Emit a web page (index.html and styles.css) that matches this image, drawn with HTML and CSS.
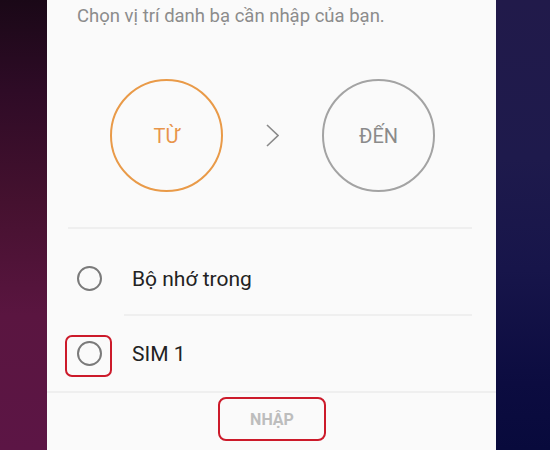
FILE: index.html
```html
<!DOCTYPE html>
<html lang="vi">
<head>
<meta charset="utf-8">
<link rel="stylesheet" href="styles.css">
</head>
<body>
<div class="screen">
  <div class="side side-left"></div>
  <div class="dialog">
    <p class="title">Chọn vị trí danh bạ cần nhập của bạn.</p>
    <div class="flow">
      <div class="bubble bubble-from">TỪ</div>
      <svg class="chevron" width="13" height="23" viewBox="0 0 13 23"><path d="M1 1 L12 11.5 L1 22" fill="none" stroke="#8a8a8a" stroke-width="1.6"/></svg>
      <div class="bubble bubble-to">ĐẾN</div>
    </div>
    <div class="divider"></div>
    <ul class="options">
      <li class="option option-first">
        <span class="radio"></span>
        <span class="label">Bộ nhớ trong</span>
      </li>
      <li class="option">
        <span class="radio radio-marked"></span>
        <span class="label">SIM 1</span>
      </li>
    </ul>
    <div class="footer">
      <button class="import">NHẬP</button>
    </div>
  </div>
  <div class="side side-right"></div>
</div>
</body>
</html>
```
FILE: styles.css
```css
* { box-sizing: border-box; }
html, body { margin: 0; padding: 0; }
body {
  width: 550px;
  height: 450px;
  overflow: hidden;
  font-family: Roboto, "Noto Sans", "Liberation Sans", sans-serif;
}
.screen {
  display: flex;
  width: 550px;
  height: 450px;
}
.side { height: 100%; }
.side-left {
  width: 47px;
  background: linear-gradient(180deg, #1a0817 0%, #2e0b26 20%, #45112f 45%, #5a1540 70%, #5c1545 100%);
}
.side-right {
  width: 54px;
  background: linear-gradient(180deg, #211a4a 0%, #1e1a4c 35%, #17154a 60%, #0c0c40 85%, #080a3c 100%);
}
.dialog {
  width: 449px;
  height: 100%;
  background: #fafafa;
  display: flex;
  flex-direction: column;
}
.title {
  margin: 0;
  padding: 4px 0 0 30px;
  font-size: 18.5px;
  line-height: 24px;
  color: #8c8c8c;
  white-space: nowrap;
}
.flow {
  margin-top: 51px;
  display: flex;
  align-items: center;
  justify-content: center;
  padding-left: 2px;
}
.bubble {
  width: 113px;
  height: 113px;
  border-radius: 50%;
  display: flex;
  align-items: center;
  justify-content: center;
  font-size: 20px;
}
.bubble-from {
  border: 2px solid #e99a48;
  color: #e8954a;
}
.bubble-to {
  border: 2px solid #a3a3a3;
  color: #8a8a8a;
}
.chevron {
  margin: 0 43px;
  display: block;
}
.divider {
  margin: 35px 24px 0 21px;
  height: 2px;
  background: #efefef;
}
.options {
  list-style: none;
  margin: 0;
  padding: 12px 0 0 0;
}
.option {
  height: 75px;
  display: flex;
  align-items: center;
  padding-left: 30px;
}
.option-first {
  position: relative;
}
.option-first::after {
  content: "";
  position: absolute;
  left: 77px;
  right: 24px;
  bottom: 0;
  height: 2px;
  background: #efefef;
}
.radio {
  position: relative;
  width: 25px;
  height: 25px;
  border: 2px solid #7a7a7a;
  border-radius: 50%;
  flex: none;
}
.radio-marked::after {
  content: "";
  position: absolute;
  left: -14px;
  top: -8px;
  width: 43px;
  height: 38px;
  border: 2px solid #cc1a2a;
  border-radius: 7px;
}
.label {
  margin-left: 30px;
  font-size: 21px;
  color: #222;
}
.footer {
  border-top: 2px solid #efefef;
  flex: 1;
  display: flex;
  justify-content: center;
  align-items: flex-start;
  padding: 4px 0 0 1px;
}
.import {
  width: 108px;
  height: 44px;
  border: 2px solid #cc1a2a;
  border-radius: 8px;
  background: transparent;
  font-family: Roboto, "Noto Sans", "Liberation Sans", sans-serif;
  font-weight: 700;
  font-size: 16px;
  color: #bdbdbd;
  padding: 0;
}
```
